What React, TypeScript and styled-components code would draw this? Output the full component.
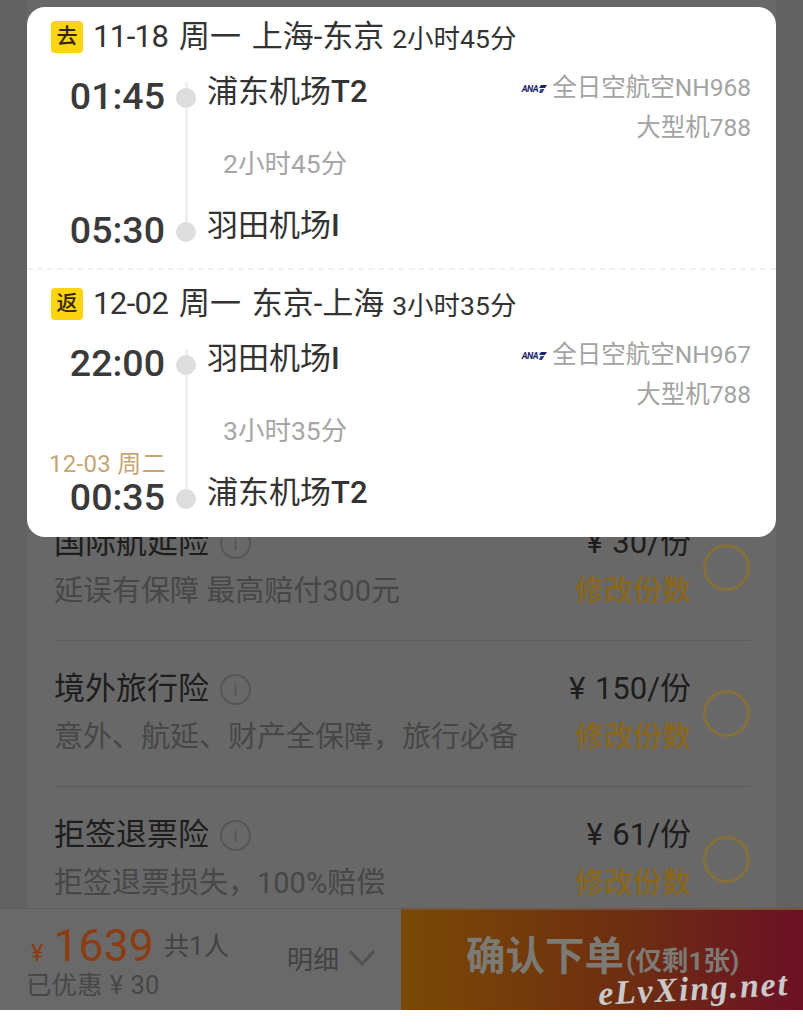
import React from "react";
import styled, { createGlobalStyle } from "styled-components";

const GlobalStyle = createGlobalStyle`
  html, body {
    margin: 0;
    padding: 0;
    background: #fff;
    font-family: Roboto, "Noto Sans CJK SC", sans-serif;
  }
  * { box-sizing: border-box; }
`;

// Page behind the dimmed layer
const Page = styled.div`
  position: relative;
  width: 803px;
  height: 1024px;
  overflow: hidden;
  display: flex;
  flex-direction: column;
  background: #fff;
`;
const Backdrop = styled.div`
  height: 908px;
  background: #626262;
  padding: 0 27px;
  display: flex;
`;
const Panel = styled.div`
  flex: 1;
  background: #686868;
  padding: 495px 26px 0 27px;
`;
const InsuranceRow = styled.div<{ $last?: boolean }>`
  height: 146px;
  display: flex;
  align-items: center;
  justify-content: space-between;
  border-bottom: 1px solid ${(p) => (p.$last ? "transparent" : "#5c5c5c")};
`;
const InsuranceTitle = styled.div`
  display: flex;
  align-items: center;
  gap: 11px;
  font-size: 31px;
  line-height: 44px;
  margin-bottom: 3px;
  color: #1d1d1d;
`;
const InfoIcon = styled.span`
  width: 31px;
  height: 31px;
  border: 2px solid #565656;
  border-radius: 50%;
  color: #565656;
  font-size: 18px;
  line-height: 27px;
  text-align: center;
`;
const InsuranceDesc = styled.div`
  font-size: 29px;
  line-height: 46px;
  color: #474747;
  white-space: nowrap;
`;
const PriceBlock = styled.div`
  display: flex;
  align-items: center;
  gap: 12px;
`;
const PriceText = styled.div`
  text-align: right;
`;
const Price = styled.div`
  font-size: 31px;
  line-height: 44px;
  margin-bottom: 3px;
  word-spacing: 2px;
  color: #1d1d1d;
  white-space: nowrap;
`;
const ChangeCount = styled.div`
  font-size: 29px;
  font-weight: 500;
  line-height: 46px;
  color: #8a671a;
  white-space: nowrap;
`;
const Radio = styled.div`
  width: 47px;
  height: 47px;
  border: 3px solid #86703a;
  border-radius: 50%;
`;

// Bottom bar
const BottomBar = styled.div`
  height: 102px;
  display: flex;
  border-top: 1px solid #5c5c5c;
  background: #696969;
`;
const Summary = styled.div`
  width: 401px;
  padding: 11px 0 0 26px;
  display: flex;
  justify-content: space-between;
`;
const PriceColumn = styled.div`
  display: flex;
  flex-direction: column;
`;
const TotalRow = styled.div`
  display: flex;
  align-items: baseline;
  height: 48px;
`;
const Yen = styled.span`
  font-size: 24px;
  color: #8c3c12;
  margin-left: 5px;
  margin-right: 10px;
`;
const Total = styled.span`
  font-size: 44.5px;
  line-height: 52px;
  color: #8c3c12;
`;
const People = styled.span`
  font-size: 25.5px;
  color: #424242;
  margin-left: 10px;
  position: relative;
  top: -6px;
`;
const Saved = styled.div`
  font-size: 25.5px;
  line-height: 34px;
  word-spacing: 1px;
  color: #474747;
`;
const Detail = styled.div`
  display: flex;
  align-items: center;
  gap: 9px;
  margin-right: 25px;
  height: 75px;
  font-size: 26px;
  color: #424242;
`;
const OrderButton = styled.div`
  flex: 1;
  margin-top: -1px;
  border-top: 2px solid #75553f;
  background: linear-gradient(90deg, #7a4905 0%, #6d2c12 60%, #6c1026 100%);
  padding: 21px 0 0 65px;
  color: #7c7a74;
  font-weight: 700;
  white-space: nowrap;
`;
const OrderLabel = styled.span`
  font-size: 39.5px;
  line-height: 52px;
`;
const OrderNote = styled.span`
  font-size: 26.5px;
  margin-left: 2px;
`;
const Watermark = styled.div`
  position: absolute;
  left: 598px;
  top: 969px;
  font-family: "Liberation Serif", serif;
  font-style: italic;
  font-weight: 700;
  font-size: 34px;
  letter-spacing: 1.8px;
  line-height: 40px;
  color: #c9c9c9;
  transform: rotate(-3deg);
  white-space: nowrap;
`;

// Flight details dialog
const Dialog = styled.div`
  position: absolute;
  left: 27px;
  top: 7px;
  width: 749px;
  height: 530px;
  background: #fff;
  border-radius: 18px;
  overflow: hidden;
`;
const Leg = styled.section<{ $first?: boolean }>`
  height: ${(p) => (p.$first ? "263px" : "267px")};
  padding: ${(p) => (p.$first ? "12px" : "16px")} 25px 0 24px;
  border-bottom: ${(p) => (p.$first ? "2px dashed #f1f1f1" : "none")};
`;
const LegHeader = styled.div`
  display: flex;
  align-items: center;
  height: 35px;
  color: #333;
`;
const Badge = styled.span`
  width: 32px;
  height: 32px;
  border-radius: 4px;
  background: #fcd412;
  color: #33270a;
  font-size: 21px;
  font-weight: 500;
  line-height: 30px;
  text-align: center;
  margin-right: 10px;
`;
const LegDate = styled.span`
  font-size: 31px;
  line-height: 35px;
  word-spacing: 3px;
  white-space: nowrap;
`;
const LegDay = styled.span`
  letter-spacing: -0.6px;
`;
const LegTotal = styled.span`
  font-size: 26.5px;
  margin-left: 8px;
  white-space: nowrap;
`;
const Timeline = styled.div`
  display: grid;
  grid-template-columns: 145px 1fr auto;
  grid-template-rows: 76px 58px 76px;
  margin-top: 4px;
`;
const TimeCell = styled.div<{ $row: number }>`
  position: relative;
  grid-column: 1;
  grid-row: ${(p) => p.$row};
  display: flex;
  align-items: center;
  justify-content: flex-end;
  padding-right: 31px;
  font-size: 37.5px;
  font-weight: 500;
  line-height: 44px;
  color: #3a3a3a;
`;
const Dot = styled.span`
  position: absolute;
  right: 0;
  top: 30px;
  width: 20px;
  height: 20px;
  border-radius: 50%;
  background: #dedede;
`;
const Rail = styled.span<{ $top: number; $bottom: number }>`
  position: absolute;
  right: 8px;
  top: ${(p) => p.$top}px;
  bottom: ${(p) => p.$bottom}px;
  width: 3px;
  background: #f0f0f0;
`;
const NextDay = styled.span`
  position: absolute;
  left: -2px;
  top: -10px;
  font-size: 24px;
  font-weight: 400;
  letter-spacing: 0.3px;
  line-height: 30px;
  color: #c5a673;
  white-space: nowrap;
`;
const Airport = styled.div<{ $row: number }>`
  grid-column: 2;
  grid-row: ${(p) => p.$row};
  padding-left: 11px;
  font-size: 31px;
  line-height: 44px;
  color: #333;
  align-self: center;
  white-space: nowrap;
  margin-top: -8px;

  b { font-weight: 500; }
`;
const Duration = styled.div`
  grid-column: 2;
  grid-row: 2;
  align-self: center;
  padding: 2px 0 0 27px;
  font-size: 26.5px;
  line-height: 36px;
  color: #a6a6a6;
`;
const FlightInfo = styled.div`
  grid-column: 3;
  grid-row: 1 / 3;
  justify-self: end;
  text-align: right;
  font-size: 24.5px;
  line-height: 40px;
  color: #a3a3a3;
  white-space: nowrap;
  margin-top: 10px;
`;
const Carrier = styled.span`
  display: inline-flex;
  align-items: center;
  gap: 1px;
  margin-right: 5px;
  vertical-align: 4px;
  font-size: 9px;
  font-weight: 700;
  font-style: italic;
  line-height: 10px;
  letter-spacing: -0.5px;
  color: #1b1f6b;
`;

const AnaStripes = () => (
  <svg width="8" height="8" viewBox="0 0 8 8">
    <polygon points="2,0 8,0 6,3 0,3" fill="#1b1f6b" />
    <polygon points="1.5,4 5.5,4 3,8 0,8" fill="#3a3f8c" />
  </svg>
);

const Chevron = () => (
  <svg width="28" height="18" viewBox="0 0 28 18" fill="none">
    <path d="M2 2 L14 15 L26 2" stroke="#515151" strokeWidth="3" />
  </svg>
);

const insurances = [
  { title: "国际航延险", desc: "延误有保障 最高赔付300元", price: "¥ 30/份" },
  { title: "境外旅行险", desc: "意外、航延、财产全保障，旅行必备", price: "¥ 150/份" },
  { title: "拒签退票险", desc: "拒签退票损失，100%赔偿", price: "¥ 61/份" },
];

const legs = [
  {
    badge: "去",
    day: "11-18",
    date: " 周一 上海-东京",
    total: "2小时45分",
    from: { time: "01:45", name: "浦东机场", term: "T2" },
    to: { time: "05:30", name: "羽田机场", term: "I" },
    flight: "全日空航空NH968",
    plane: "大型机788",
  },
  {
    badge: "返",
    day: "12-02",
    date: " 周一 东京-上海",
    total: "3小时35分",
    from: { time: "22:00", name: "羽田机场", term: "I" },
    to: { time: "00:35", name: "浦东机场", term: "T2" },
    flight: "全日空航空NH967",
    plane: "大型机788",
    nextDay: "12-03 周二",
  },
];

export default function App(): JSX.Element {
  return (
    <Page>
      <GlobalStyle />
      <Backdrop>
        <Panel>
          {insurances.map((item, i) => (
            <InsuranceRow key={item.title} $last={i === insurances.length - 1}>
              <div>
                <InsuranceTitle>
                  {item.title}
                  <InfoIcon>i</InfoIcon>
                </InsuranceTitle>
                <InsuranceDesc>{item.desc}</InsuranceDesc>
              </div>
              <PriceBlock>
                <PriceText>
                  <Price>{item.price}</Price>
                  <ChangeCount>修改份数</ChangeCount>
                </PriceText>
                <Radio />
              </PriceBlock>
            </InsuranceRow>
          ))}
        </Panel>
      </Backdrop>

      <BottomBar>
        <Summary>
          <PriceColumn>
            <TotalRow>
              <Yen>¥</Yen>
              <Total>1639</Total>
              <People>共1人</People>
            </TotalRow>
            <Saved>已优惠 ¥ 30</Saved>
          </PriceColumn>
          <Detail>
            明细
            <Chevron />
          </Detail>
        </Summary>
        <OrderButton>
          <OrderLabel>确认下单</OrderLabel>
          <OrderNote>(仅剩1张)</OrderNote>
        </OrderButton>
      </BottomBar>

      <Dialog>
        {legs.map((leg, i) => (
          <Leg key={leg.badge} $first={i === 0}>
            <LegHeader>
              <Badge>{leg.badge}</Badge>
              <LegDate>
                <LegDay>{leg.day}</LegDay>
                {leg.date}
              </LegDate>
              <LegTotal>{leg.total}</LegTotal>
            </LegHeader>
            <Timeline>
              <TimeCell $row={1}>
                {leg.from.time}
                <Rail $top={24} $bottom={0} />
                <Dot />
              </TimeCell>
              <Airport $row={1}>
                {leg.from.name}
                <b>{leg.from.term}</b>
              </Airport>
              <FlightInfo>
                <Carrier>
                  ANA
                  <AnaStripes />
                </Carrier>
                {leg.flight}
                <br />
                {leg.plane}
              </FlightInfo>
              <TimeCell $row={2}>
                <Rail $top={0} $bottom={0} />
              </TimeCell>
              <Duration>{leg.total}</Duration>
              <TimeCell $row={3}>
                {leg.to.time}
                {leg.nextDay && <NextDay>{leg.nextDay}</NextDay>}
                <Rail $top={0} $bottom={40} />
                <Dot />
              </TimeCell>
              <Airport $row={3}>
                {leg.to.name}
                <b>{leg.to.term}</b>
              </Airport>
            </Timeline>
          </Leg>
        ))}
      </Dialog>

      <Watermark>eLvXing.net</Watermark>
    </Page>
  );
}
